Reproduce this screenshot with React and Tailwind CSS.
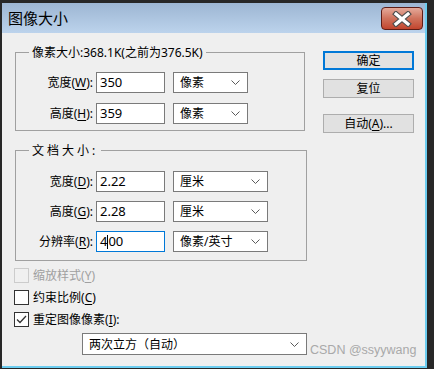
const Chevron = () => (
  <svg width="9" height="5" viewBox="0 0 9 5" className="shrink-0">
    <polyline points="0.5,0.5 4.5,4.5 8.5,0.5" fill="none" stroke="#5a5a5a" strokeWidth="1" />
  </svg>
);

function Select({ value, className = "" }) {
  return (
    <div
      className={`flex h-[21px] items-center justify-between border border-[#7a7a7a] bg-white pl-[6px] pr-[7px] text-[12px] leading-[19px] ${className}`}
    >
      <span>{value}</span>
      <Chevron />
    </div>
  );
}

function FieldRow({ label, k, value, unit, unitWidth, focused }) {
  return (
    <div className="flex h-[21px] items-center">
      <div className="w-[77px] text-right text-[12px] leading-[21px]">
        {label}(<u className="underline-offset-[2px]">{k}</u>):
      </div>
      <div
        className={`ml-[3px] flex h-[21px] w-[69px] items-center border bg-white pl-[3px] text-[13px] leading-[19px] ${
          focused ? "border-[#0078d7]" : "border-[#7a7a7a]"
        }`}
      >
        {focused ? (
          <>
            <span>4</span>
            <span className="h-[14px] w-px bg-black" />
            <span>00</span>
          </>
        ) : (
          value
        )}
      </div>
      <Select value={unit} className={`ml-[8px] ${unitWidth}`} />
    </div>
  );
}

function Button({ children, primary }) {
  return (
    <div
      className={`flex h-[19px] w-[91px] items-center justify-center bg-[#e1e1e1] text-[12px] leading-[15px] ${
        primary ? "border-2 border-[#0078d7]" : "border border-[#adadad]"
      }`}
    >
      {children}
    </div>
  );
}

function Check({ label, k, checked, disabled, colon }) {
  return (
    <div className="flex h-[15px] items-center">
      <div
        className={`flex h-[15px] w-[15px] items-center justify-center border ${
          disabled ? "border-[#cccccc] bg-[#f0f0f0]" : "border-[#333333] bg-white"
        }`}
      >
        {checked ? (
          <svg width="11" height="9" viewBox="0 0 11 9">
            <polyline points="1,4.5 4,7.5 10,1" fill="none" stroke="#333" strokeWidth="1.3" />
          </svg>
        ) : null}
      </div>
      <div className={`ml-[4px] text-[12px] leading-[15px] ${disabled ? "text-[#a0a0a0]" : "text-black"}`}>
        {label}(<u className="underline-offset-[2px]">{k}</u>){colon ? ":" : ""}
      </div>
    </div>
  );
}

export default function App() {
  return (
    <div className="h-[369px] w-[434px] overflow-hidden bg-[#272727] pl-[2px] pt-[3px] font-['Noto_Sans','Noto_Sans_CJK_SC',sans-serif] text-black">
      <div className="relative flex h-[365px] w-[425px] flex-col border-b-2 border-r-2 border-[#6ccdf0] bg-[#efefef]">
        {/* title bar */}
        <div className="flex h-[30px] shrink-0 items-start justify-between bg-linear-to-b from-[#9db6d3] to-[#bcd3ec] pl-[6px] pr-[2px]">
          <div className="pt-[6px] text-[15px] leading-[18px]">图像大小</div>
          <div className="mt-[4px] flex h-[23px] w-[42px] items-center justify-center rounded-[4px] border border-[#5e1d16] bg-linear-to-b from-[#e4aa9b] via-[#cf725c] to-[#c2442d]">
            <svg width="20" height="16" viewBox="0 0 20 16">
              <path d="M4 3 L16 13 M16 3 L4 13" stroke="#4d4d4d" strokeWidth="5.5" strokeLinecap="square" />
              <path d="M4 3 L16 13 M16 3 L4 13" stroke="#ffffff" strokeWidth="3.2" strokeLinecap="square" />
            </svg>
          </div>
        </div>

        {/* body */}
        <div className="flex">
          <div className="ml-[13px] flex w-[292px] flex-col">
            <fieldset className="mt-[12px] w-[290px] border border-[#a0a0a0] pb-[6px] pt-[12px]">
              <legend className="ml-[13px] px-[3px] text-[12px] leading-[15px]">像素大小:368.1K(之前为376.5K)</legend>
              <div className="flex flex-col gap-[10px]">
                <FieldRow label="宽度" k="W" value="350" unit="像素" unitWidth="w-[75px]" />
                <FieldRow label="高度" k="H" value="359" unit="像素" unitWidth="w-[75px]" />
              </div>
            </fieldset>

            <fieldset className="mt-[12px] w-[292px] border border-[#a0a0a0] pb-[8px] pt-[13px]">
              <legend className="ml-[13px] px-[3px] text-[12px] leading-[15px] tracking-[3px]">文档大小:</legend>
              <div className="flex flex-col gap-[9px]">
                <FieldRow label="宽度" k="D" value="2.22" unit="厘米" unitWidth="w-[95px]" />
                <FieldRow label="高度" k="G" value="2.28" unit="厘米" unitWidth="w-[95px]" />
                <FieldRow label="分辨率" k="R" value="400" unit="像素/英寸" unitWidth="w-[95px]" focused />
              </div>
            </fieldset>
          </div>

          <div className="ml-[16px] mt-[18px] flex flex-col">
            <Button primary>确定</Button>
            <div className="mt-[9px]">
              <Button>复位</Button>
            </div>
            <div className="mt-[16px]">
              <Button>
                自动(<u className="underline-offset-[2px]">A</u>)...
              </Button>
            </div>
          </div>
        </div>

        <div className="ml-[12px] mt-[7px] flex flex-col gap-[7px]">
          <Check label="缩放样式" k="Y" disabled />
          <Check label="约束比例" k="C" />
          <Check label="重定图像像素" k="I" checked colon />
        </div>

        <Select value="两次立方（自动）" className="ml-[80px] mt-[6px] h-[22px] w-[225px]" />

        <div className="absolute left-[308px] top-[340px] whitespace-nowrap font-['Liberation_Sans',sans-serif] text-[12.5px] leading-[15px] text-[#a9a9a9]">
          CSDN @ssyywang
        </div>
      </div>
    </div>
  );
}
